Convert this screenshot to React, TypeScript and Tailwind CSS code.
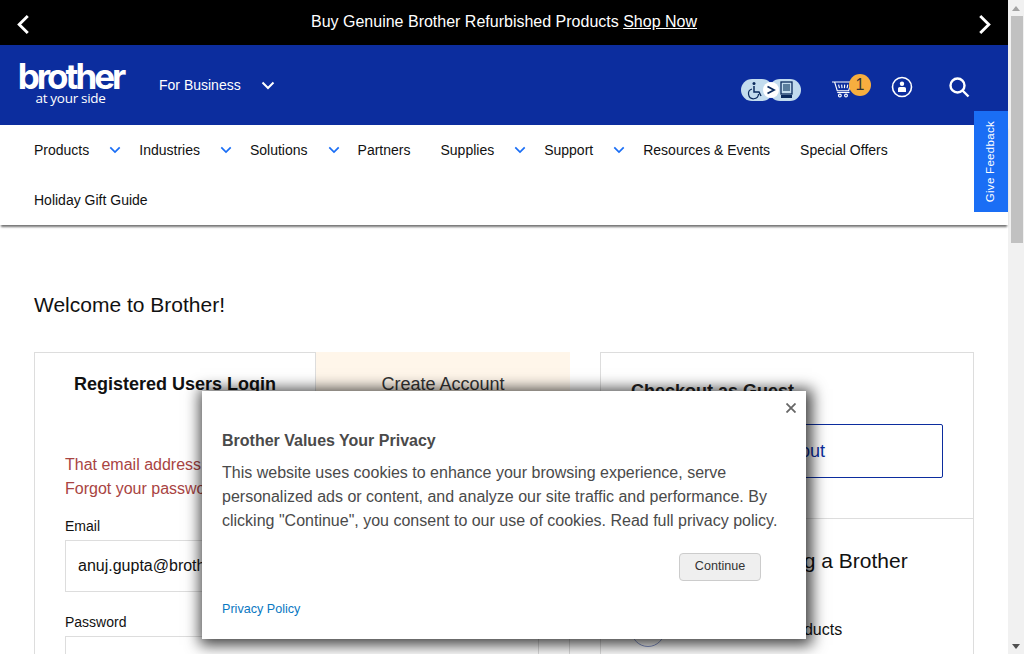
import type { ReactNode } from "react";

const FONT = "font-['Liberation_Sans',Arial,sans-serif]";

function Chevron({ className }: { className: string }) {
  return (
    <svg viewBox="0 0 14 9" className={className} fill="none" stroke="currentColor" strokeWidth="2">
      <path d="M1.5 1.5 7 7l5.5-5.5" />
    </svg>
  );
}

function BannerArrow({ flip }: { flip?: boolean }) {
  return (
    <svg viewBox="0 0 14 22" className="mt-[4px] h-[21px] w-[14px] text-white" fill="none" stroke="currentColor" strokeWidth="3">
      <path d={flip ? "M2 2l9 9-9 9" : "M12 2l-9 9 9 9"} />
    </svg>
  );
}

function AccessIcon() {
  return (
    <svg viewBox="0 0 60 24" className="mt-[9px] h-[24px] w-[60px]">
      <rect x="0" y="1" width="32" height="22" rx="11" fill="#c3dcee" />
      <rect x="28" y="1" width="32" height="22" rx="11" fill="#c3dcee" />
      <circle cx="30" cy="12" r="8" fill="#fff" />
      <path d="M26.5 8.5l6.5 3.5-6.5 3.5" fill="none" stroke="#0a2a5c" strokeWidth="1.8" />
      <circle cx="13" cy="5.6" r="1.5" fill="#0a2a5c" />
      <path d="M13 8v6h5l2 4" fill="none" stroke="#0a2a5c" strokeWidth="1.5" />
      <path d="M11 11a5 5 0 1 0 6.5 5" fill="none" stroke="#0a2a5c" strokeWidth="1.2" />
      <rect x="40" y="4" width="11" height="12" fill="none" stroke="#0a2a5c" strokeWidth="1.3" />
      <rect x="42" y="6" width="7" height="7" fill="#5a7d9c" />
      <rect x="40" y="17" width="11" height="3" fill="#0a2a5c" />
    </svg>
  );
}

function CartIcon() {
  return (
    <svg viewBox="0 0 24 20" className="mt-[7px] h-[18px] w-[21px]" fill="none" stroke="#fff" strokeWidth="1.3">
      <path d="M0 2h3l3 10h13l3-10H3" />
      <path d="M7.5 5l1 4M11 5l.5 4M14.5 5l-.3 4M18 5l-.8 4" />
      <path d="M6 14h14" />
      <circle cx="9" cy="17.5" r="1.6" />
      <circle cx="16" cy="17.5" r="1.6" />
    </svg>
  );
}

function UserIcon() {
  return (
    <svg viewBox="0 0 22 22" className="h-[22px] w-[22px]">
      <circle cx="11" cy="11" r="9.5" fill="none" stroke="#fff" strokeWidth="1.6" />
      <circle cx="11" cy="7.8" r="2.2" fill="#fff" />
      <path d="M7 16v-3.2c0-1 .8-1.8 1.8-1.8h4.4c1 0 1.8.8 1.8 1.8V16z" fill="#fff" />
    </svg>
  );
}

function SearchIcon() {
  return (
    <svg viewBox="0 0 22 22" className="h-[22px] w-[22px]" fill="none" stroke="#fff" strokeWidth="2.4">
      <circle cx="9.5" cy="9.5" r="7" />
      <path d="M14.5 14.5l6 6" />
    </svg>
  );
}

function NavItem({ label, caret, children }: { label: string; caret?: boolean; children?: ReactNode }) {
  return (
    <div className="flex h-[50px] items-center">
      <span>{label}</span>
      {caret ? <Chevron className="ml-[20px] mr-[18px] h-[8px] w-[12px] text-[#1a6ef5]" /> : <span className="w-[30px]" />}
      {children}
    </div>
  );
}

function Scrollbar() {
  return (
    <div className="flex h-full w-4 shrink-0 flex-col items-center bg-[#f1f1f1]">
      <div className="flex h-4 w-full items-center justify-center">
        <div className="h-0 w-0 border-x-[4px] border-b-[5px] border-x-transparent border-b-[#a3a3a3]" />
      </div>
      <div className="ml-[2px] h-[227px] w-[12px] bg-[#c1c1c1]" />
      <div className="flex-1" />
      <div className="flex h-4 w-full items-center justify-center">
        <div className="h-0 w-0 border-x-[4px] border-t-[5px] border-x-transparent border-t-[#505050]" />
      </div>
    </div>
  );
}

function CookieModal() {
  return (
    <div className="absolute left-[202px] top-[391px] z-20 flex h-[248px] w-[604px] flex-col bg-white px-5 text-[#4a4a4a] shadow-[2px_2px_14px_4px_rgba(0,0,0,0.75)]">
      <svg viewBox="0 0 10 10" className="absolute right-[10px] top-[12px] h-[10px] w-[10px]" fill="none" stroke="#666" strokeWidth="1.8">
        <path d="M0.5 0.5l9 9M9.5 0.5l-9 9" />
      </svg>
      <h2 className="mt-[38px] text-base font-bold leading-6">Brother Values Your Privacy</h2>
      <p className="mt-2 text-base leading-6">
        This website uses cookies to enhance your browsing experience, serve personalized ads or content, and analyze
        our site traffic and performance. By clicking "Continue", you consent to our use of cookies. Read full privacy
        policy.
      </p>
      <div className="mt-[20px] flex justify-end pr-[25px]">
        <button className="h-[28px] w-[82px] rounded-[4px] border border-[#ccc] bg-[#efefef] pb-[2px] text-[12.6px] text-[#333]">
          Continue
        </button>
      </div>
      <a className="mt-[19px] text-[12.6px] leading-[18px] text-[#0a78c2]">Privacy Policy</a>
    </div>
  );
}

export default function App() {
  return (
    <div className={`relative flex h-[654px] w-[1024px] overflow-hidden bg-white text-[#111] ${FONT}`}>
      <div className="relative w-[1008px] shrink-0">
        <div className="flex h-[45px] items-center justify-between bg-black px-4 text-white">
          <BannerArrow />
          <div className="pb-[2px] text-base">
            Buy Genuine Brother Refurbished Products <span className="underline">Shop Now</span>
          </div>
          <BannerArrow flip />
        </div>

        <header className="flex h-[80px] items-center bg-[#0c2d9e] pl-[16px] pr-[38px] text-white">
          <div className="mb-[4px] flex w-[109px] flex-col items-center leading-none">
            <span className="font-['Inter',sans-serif] text-[35px] font-bold leading-[28px] tracking-[-3px]">brother</span>
            <span className="mt-[2px] font-['Open_Sans',sans-serif] text-[13.5px] leading-[13px] tracking-[-0.3px]">at your side</span>
          </div>
          <span className="ml-[34px] text-sm">For Business</span>
          <Chevron className="ml-[20px] h-[9px] w-[14px] text-white" />
          <div className="ml-auto flex items-center">
            <AccessIcon />
            <div className="ml-[31px] flex h-[22px] items-center">
              <CartIcon />
              <div className="-ml-[4px] flex h-[22px] w-[22px] items-center justify-center rounded-full bg-[#f7ae3f] text-base text-[#333]">
                1
              </div>
            </div>
            <div className="ml-[20px] mt-[4px]">
              <UserIcon />
            </div>
            <div className="ml-[35px] mt-[4px]">
              <SearchIcon />
            </div>
          </div>
        </header>

        <nav className="relative z-10 flex h-[100px] flex-wrap content-start pl-[34px] pr-[60px] text-sm shadow-[0_3px_2px_-1px_rgba(0,0,0,0.55)]">
          <NavItem label="Products" caret />
          <NavItem label="Industries" caret />
          <NavItem label="Solutions" caret />
          <NavItem label="Partners" />
          <NavItem label="Supplies" caret />
          <NavItem label="Support" caret />
          <NavItem label="Resources &amp; Events" />
          <NavItem label="Special Offers" />
          <NavItem label="Holiday Gift Guide" />
        </nav>

        <main className="px-[34px] pt-[67px]">
          <h1 className="text-[21px] leading-[26px]">Welcome to Brother!</h1>
          <div className="mt-[34px] flex gap-[30px]">
            <section className="w-[536px] shrink-0 border-x border-b border-[#ddd]">
              <div className="flex h-[81px] text-lg">
                <div className="flex h-full w-[281px] justify-center border-r border-t border-[#ddd] pt-[19px] font-bold leading-6">
                  Registered Users Login
                </div>
                <div className="relative -mr-px flex h-full flex-1 justify-center bg-[#fff6ea] pt-[20px] leading-6 text-[#333]">Create Account</div>
              </div>
              <div className="px-[30px]">
                <p className="mt-[20px] text-base leading-6 text-[#a94442]">
                  That email address is already registered.
                  <br />
                  Forgot your password?
                </p>
                <label className="mt-[15px] block text-sm leading-5">Email</label>
                <div className="mt-[4px] flex h-[52px] items-center border border-[#ddd] px-3 text-base">anuj.gupta@brother.com</div>
                <label className="mt-[20px] block text-sm leading-5">Password</label>
                <div className="mt-[4px] h-[52px] border border-[#ddd]" />
              </div>
            </section>

            <section className="w-[374px] shrink-0 border border-[#ddd]">
              <div className="h-[166px] border-b border-[#ddd] px-[30px] pt-[26px]">
                <h2 className="text-lg font-bold leading-6 text-[#222]">Checkout as Guest</h2>
                <div className="mt-[21px] flex h-[54px] items-center justify-center rounded-[2px] border border-[#0c2d9e] text-lg text-[#0c2d9e]">
                  Checkout
                </div>
              </div>
              <div className="px-[30px] pt-[28px]">
                <h2 className="whitespace-nowrap text-[21px] leading-[28px]">Benefits of Creating a Brother</h2>
                <div className="mt-[38px] flex items-center gap-[50px]">
                  <div className="size-[34px] shrink-0 rounded-full border border-[#8a9ad0]" />
                  <span className="text-base">Register Products</span>
                </div>
              </div>
            </section>
          </div>
        </main>

        <div className="absolute left-[974px] top-[111px] z-10 flex h-[101px] w-[34px] items-center justify-center bg-[#1a6ef5] text-white">
          <span className="-rotate-90 whitespace-nowrap text-[11.5px] tracking-[0.3px]">Give Feedback</span>
        </div>
      </div>
      <Scrollbar />
      <CookieModal />
    </div>
  );
}
